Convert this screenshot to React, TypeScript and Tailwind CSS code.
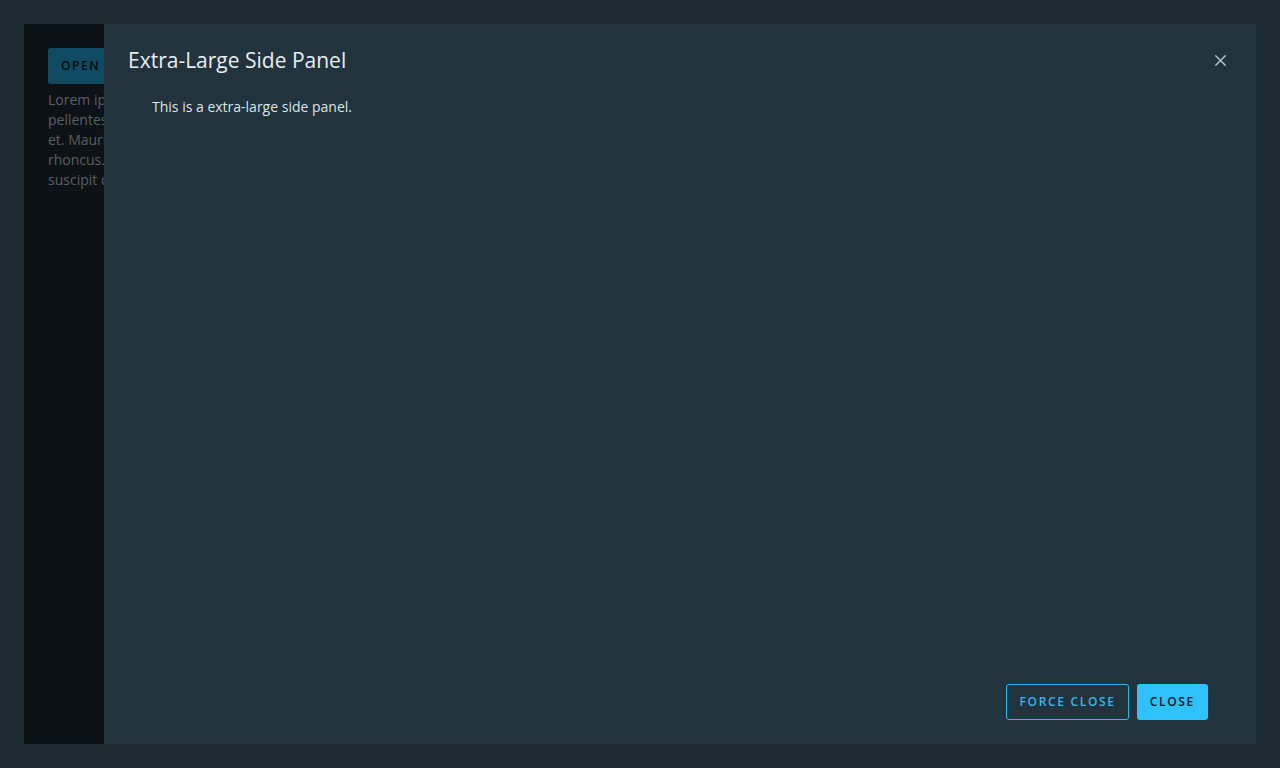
import { X } from 'lucide-react';

const font = { fontFamily: '"Open Sans", "Noto Sans", sans-serif' };

export default function App() {
    return (
        <div className="h-[768px] w-[1280px] bg-[#1c2a32] p-6" style={font}>
            <div className="flex h-full bg-[#0d1216]">

                {/* Page behind the panel (only its left strip shows) */}
                <div className="w-[80px] shrink-0 overflow-hidden">
                    <div className="flex flex-col gap-1.5 whitespace-nowrap p-6">
                        <button className="h-9 self-start rounded-[3px] bg-[#114a63] px-[13px] text-[12px] font-semibold tracking-[0.13em] text-[#070c0f]">
                            OPEN SIDE PANEL
                        </button>
                        <div className="text-[14px] leading-5 text-[#5a5f63]">
                            <p>Lorem ipsum dolor sit amet, consectetur adipiscing elit. Sed a</p>
                            <p>pellentesque nisl, sed porta magna. Fusce vitae nisi</p>
                            <p>et. Mauris ut sem eu erat interdum mattis vel sed</p>
                            <p>rhoncus. Integer ac ligula commodo, gravida nulla</p>
                            <p>suscipit ornare odio.</p>
                        </div>
                    </div>
                </div>

                {/* Side panel */}
                <div className="flex flex-1 flex-col bg-[#21333c]">
                    <div className="flex items-center justify-between px-6 pt-6">
                        <h2 className="text-[21px] leading-6 text-[#e8edf0]">Extra-Large Side Panel</h2>
                        <button className="flex h-6 w-6 items-center justify-center text-[#b9c3c9]">
                            <X size={19} strokeWidth={1.7} />
                        </button>
                    </div>
                    <div className="flex-1 px-12 pt-[25px]">
                        <p className="text-[14px] leading-5 text-[#dde3e6]">This is a extra-large side panel.</p>
                    </div>
                    <div className="flex justify-end gap-2 px-12 pb-6">
                        <button className="h-9 rounded-[3px] border border-[#2bb6ee] px-[12px] text-[12px] font-semibold tracking-[0.14em] text-[#3ab4ea]">
                            FORCE CLOSE
                        </button>
                        <button className="h-9 rounded-[3px] bg-[#30c1ff] px-[13px] text-[12px] font-semibold tracking-[0.14em] text-[#0a1a22]">
                            CLOSE
                        </button>
                    </div>
                </div>
            </div>
        </div>
    );
}
